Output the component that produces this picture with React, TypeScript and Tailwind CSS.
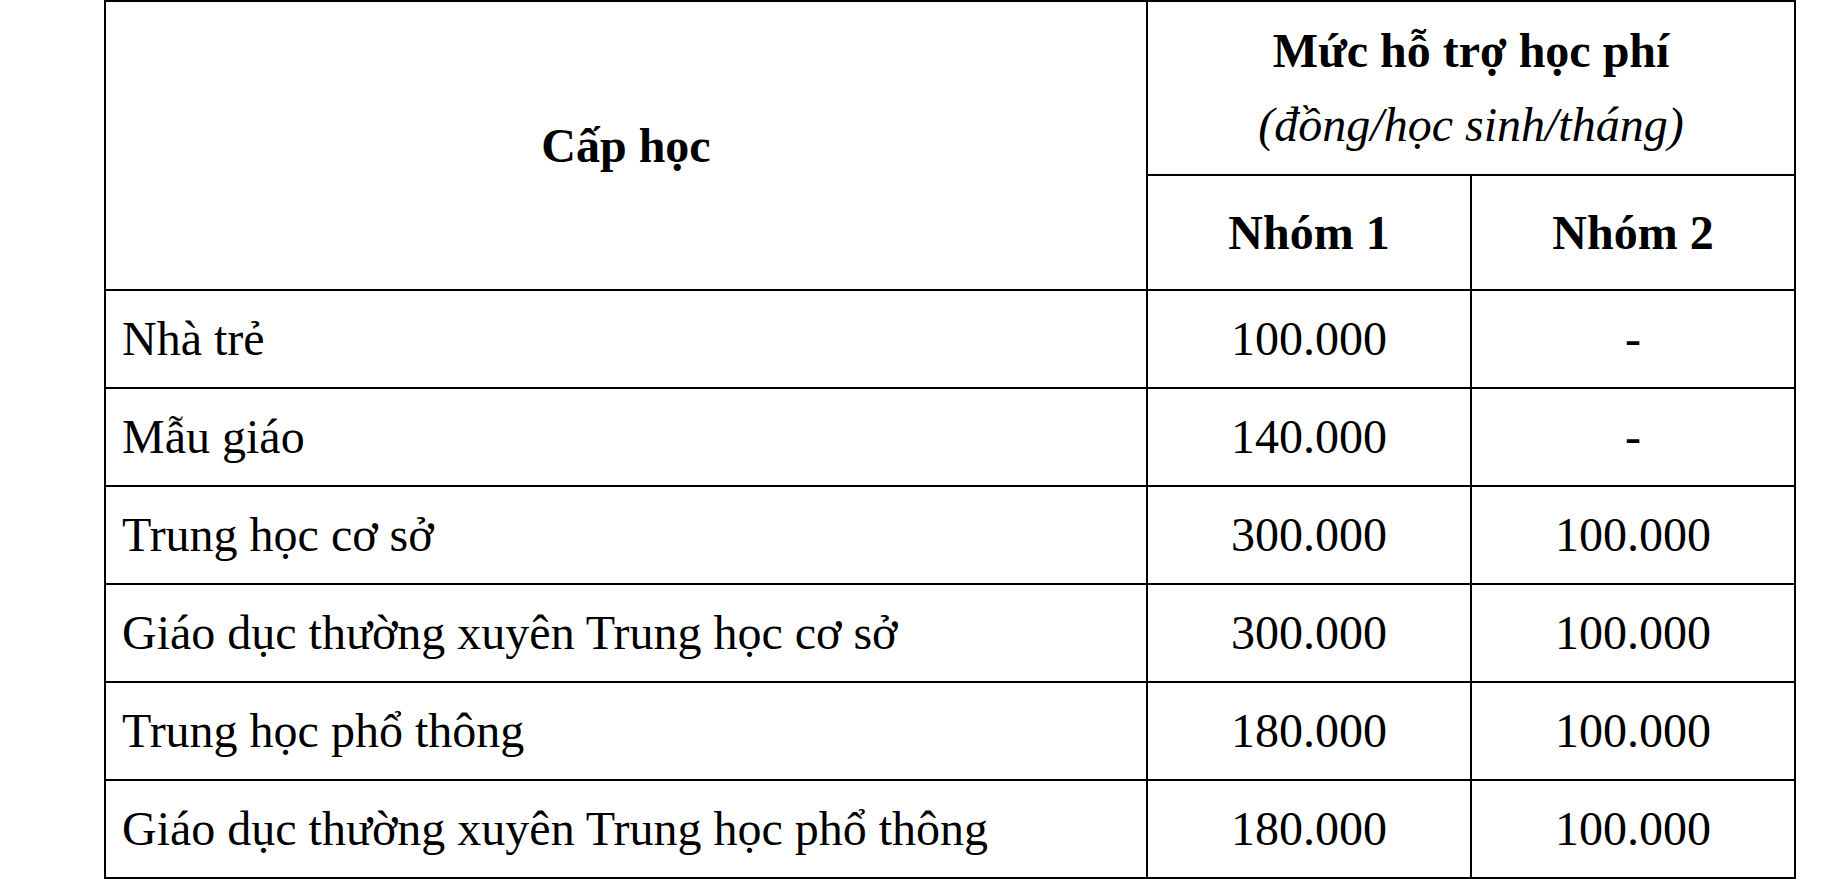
const rows = [
  { level: 'Nhà trẻ', g1: '100.000', g2: '-' },
  { level: 'Mẫu giáo', g1: '140.000', g2: '-' },
  { level: 'Trung học cơ sở', g1: '300.000', g2: '100.000' },
  { level: 'Giáo dục thường xuyên Trung học cơ sở', g1: '300.000', g2: '100.000' },
  { level: 'Trung học phổ thông', g1: '180.000', g2: '100.000' },
  { level: 'Giáo dục thường xuyên Trung học phổ thông', g1: '180.000', g2: '100.000' },
];

export default function App() {
  return (
    <div className="min-h-[884px] w-[1829px] bg-white pl-[104px] font-['Liberation_Serif','Times_New_Roman',serif] text-[48px] text-black">
      <table className="w-[1690px] table-fixed border-collapse">
        <colgroup>
          <col className="w-[1042px]" />
          <col className="w-[324px]" />
          <col className="w-[324px]" />
        </colgroup>
        <thead>
          <tr className="h-[174px]">
            <th rowSpan={2} className="border-2 border-black text-center align-middle font-bold">
              Cấp học
            </th>
            <th colSpan={2} className="border-2 border-black text-center align-middle font-bold leading-[74px]">
              <div>Mức hỗ trợ học phí</div>
              <div className="font-normal italic">(đồng/học sinh/tháng)</div>
            </th>
          </tr>
          <tr className="h-[115px]">
            <th className="border-2 border-black text-center align-middle font-bold">Nhóm 1</th>
            <th className="border-2 border-black text-center align-middle font-bold">Nhóm 2</th>
          </tr>
        </thead>
        <tbody>
          {rows.map((r) => (
            <tr key={r.level} className="h-[98px]">
              <td className="border-2 border-black pl-[16px] text-left align-middle">{r.level}</td>
              <td className="border-2 border-black text-center align-middle">{r.g1}</td>
              <td className="border-2 border-black text-center align-middle">{r.g2}</td>
            </tr>
          ))}
        </tbody>
      </table>
    </div>
  );
}
